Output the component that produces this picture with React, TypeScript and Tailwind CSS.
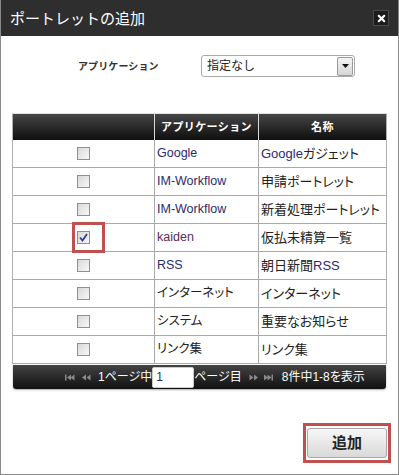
import { X } from 'lucide-react';

interface PortletRow {
  app: string;
  appLatin: boolean;
  name: React.ReactNode;
  checked?: boolean;
}

const L = ({ children }: { children: React.ReactNode }) => (
  <span className="text-[#2b2b6b]">{children}</span>
);

const rows: PortletRow[] = [
  { app: 'Google', appLatin: true, name: <><L>Google</L>ガジェット</> },
  { app: 'IM-Workflow', appLatin: true, name: '申請ポートレット' },
  { app: 'IM-Workflow', appLatin: true, name: '新着処理ポートレット' },
  { app: 'kaiden', appLatin: true, name: '仮払未精算一覧', checked: true },
  { app: 'RSS', appLatin: true, name: <>朝日新聞<L>RSS</L></> },
  { app: 'インターネット', appLatin: false, name: 'インターネット' },
  { app: 'システム', appLatin: false, name: '重要なお知らせ' },
  { app: 'リンク集', appLatin: false, name: 'リンク集' },
];

const Checkbox = ({ checked }: { checked?: boolean }) => (
  <div className="w-[13px] h-[13px] border border-[#8f8f8f] bg-gradient-to-br from-[#d8d8d8] to-[#f8f8f8] flex items-center justify-center">
    {checked && (
      <svg width="9" height="9" viewBox="0 0 9 9">
        <path d="M1 4.5 L3.5 7.5 L8 1" fill="none" stroke="#2a3f9a" strokeWidth="1.8" />
      </svg>
    )}
  </div>
);

const PagerIcon = ({ kind }: { kind: 'first' | 'prev' | 'next' | 'last' }) => (
  <svg width="11" height="7" viewBox="0 0 11 7" fill="#8a8a8a">
    {kind === 'first' && (
      <>
        <rect x="1" y="0.5" width="1.5" height="6" />
        <path d="M3 3.5 L7 0.5 V6.5 Z M6.5 3.5 L10.5 0.5 V6.5 Z" />
      </>
    )}
    {kind === 'prev' && <path d="M1 3.5 L5 0.5 V6.5 Z M5.5 3.5 L9.5 0.5 V6.5 Z" />}
    {kind === 'next' && <path d="M10 3.5 L6 0.5 V6.5 Z M5.5 3.5 L1.5 0.5 V6.5 Z" />}
    {kind === 'last' && (
      <>
        <path d="M1 0.5 L5 3.5 L1 6.5 Z M4.5 0.5 L8.5 3.5 L4.5 6.5 Z" />
        <rect x="8.5" y="0.5" width="1.5" height="6" />
      </>
    )}
  </svg>
);

export default function App() {
  return (
    <div className="w-[399px] h-[475px] bg-white border-x border-b border-[#8a8a8a] flex flex-col font-['Liberation_Sans','Noto_Sans_CJK_JP',sans-serif] text-[#222]">
      <div className="h-[36px] bg-[#2e2e2e] flex items-center justify-between pl-[9px] pr-[9px] shrink-0">
        <span className="text-white text-[15px] leading-none">ポートレットの追加</span>
        <div className="w-[16px] h-[16px] bg-[#1c1c1c] border border-[#4a4a4a] flex items-center justify-center">
          <X className="w-[11px] h-[11px] text-white" strokeWidth={4.5} />
        </div>
      </div>

      <div className="flex items-center mt-[19px] h-[22px]">
        <span className="ml-[77px] w-[123px] text-[10px] font-bold tracking-[0.1px] text-[#333]">アプリケーション</span>
        <div className="w-[154px] h-[22px] border border-[#a9a9a9] rounded-[3px] flex items-center justify-between pl-[5px] pr-[1px]">
          <span className="text-[12px]">指定なし</span>
          <div className="w-[16px] h-[19px] border border-[#9a9a9a] rounded-[2px] bg-gradient-to-b from-[#f4f4f4] to-[#d6d6d6] flex items-center justify-center">
            <svg width="7" height="4" viewBox="0 0 7 4">
              <path d="M0 0 H7 L3.5 4 Z" fill="#111" />
            </svg>
          </div>
        </div>
      </div>

      <div className="mt-[36px] ml-[11px] w-[375px] border-t border-[#e2e2e2] border-x border-x-[#b0b0b0]">
        <div className="flex h-[26px] bg-gradient-to-b from-[#474747] to-[#0f0f0f] text-white text-[11px] font-bold tracking-[0.4px]">
          <div className="w-[142px] border-r border-[#d9d9d9]" />
          <div className="w-[104px] border-r border-[#d9d9d9] flex items-center justify-center">アプリケーション</div>
          <div className="flex-1 flex items-center justify-center">名称</div>
        </div>
        {rows.map((row, i) => (
          <div key={i} className="flex h-[28px] border-b border-[#aaaaaa] text-[13px] [font-feature-settings:'palt'] whitespace-nowrap">
            <div className="w-[142px] border-r border-[#aaaaaa] flex items-center justify-center relative">
              <Checkbox checked={row.checked} />
              {row.checked && (
                <div className="absolute left-[59px] top-[-2px] w-[33px] h-[31px] border-[3px] border-[#c0504d]" />
              )}
            </div>
            <div className="w-[104px] border-r border-[#aaaaaa] flex items-center pl-[2px] text-[12.5px]">
              {row.appLatin ? <span className={row.app === 'kaiden' ? 'text-[#5a2a5e]' : 'text-[#2b2b6b]'}>{row.app}</span> : row.app}
            </div>
            <div className="flex-1 flex items-center pl-[2px]">{row.name}</div>
          </div>
        ))}
      </div>

      <div className="ml-[12px] w-[373px] h-[24px] mt-[1px] bg-gradient-to-b from-[#444] to-[#111] rounded-b-[3px] shadow-[0_1px_2px_rgba(0,0,0,0.35)] flex items-center text-white text-[12px] [font-feature-settings:'palt'] whitespace-nowrap">
        <div className="ml-[51px] flex items-center gap-[6px]">
          <PagerIcon kind="first" />
          <PagerIcon kind="prev" />
        </div>
        <span className="ml-[6px]">1ページ中</span>
        <div className="ml-[0px] w-[42px] h-[21px] bg-white rounded-[2px] border border-[#ccc] flex items-center pl-[3px] text-[#2b2b6b] text-[12px]">1</div>
        <span className="ml-[0px]">ページ目</span>
        <div className="ml-[6px] flex items-center gap-[4px]">
          <PagerIcon kind="next" />
          <PagerIcon kind="last" />
        </div>
        <span className="ml-[8px]">8件中1-8を表示</span>
      </div>

      <div className="flex-1 flex items-end justify-end pr-[7px] pb-[11px]">
        <div className="border-[3px] border-[#c0504d] px-[1px] py-[2px]">
          <button className="w-[80px] h-[30px] rounded-[3px] border border-[#a8a8a8] bg-gradient-to-b from-[#f7f7f7] to-[#d9d9d9] text-[15px] font-bold text-[#222] flex items-center justify-center">
            追加
          </button>
        </div>
      </div>
    </div>
  );
}
